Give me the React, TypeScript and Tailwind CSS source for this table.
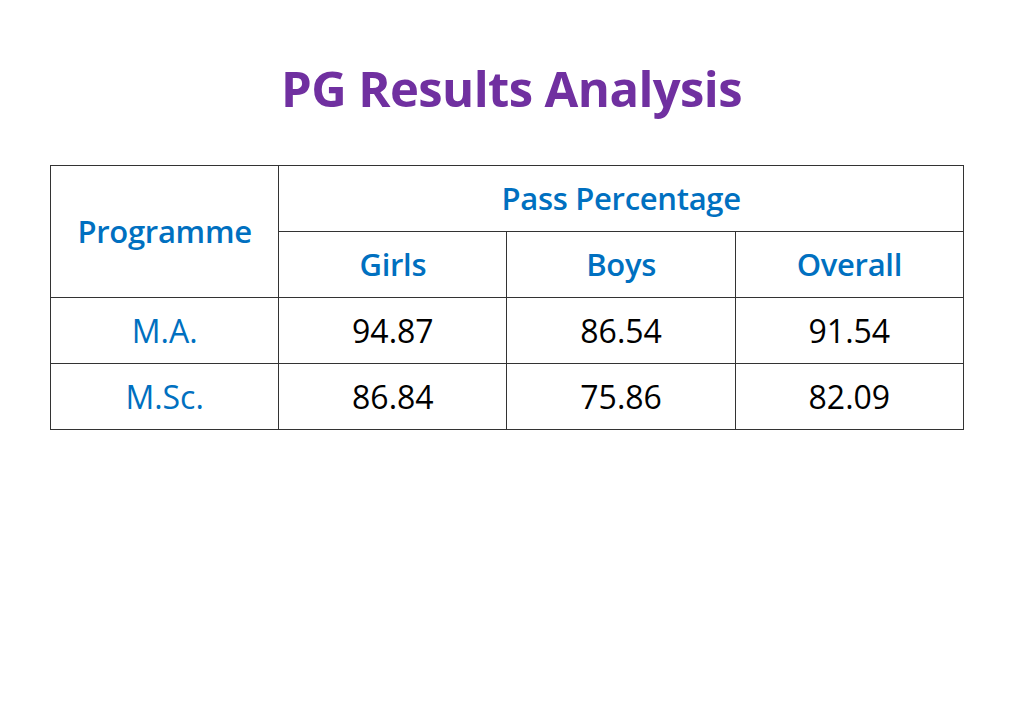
const rows = [
  { name: "M.A.", girls: "94.87", boys: "86.54", overall: "91.54" },
  { name: "M.Sc.", girls: "86.84", boys: "75.86", overall: "82.09" },
];

export default function App() {
  return (
    <div className="w-[1023px] h-[708px] bg-white font-['Open_Sans',sans-serif]">
      <h1 className="pt-[54px] text-center text-[49px] leading-[68px] font-bold tracking-[-0.6px] text-[#7030a0]">
        PG Results Analysis
      </h1>

      <table className="ml-[50px] mt-[43px] w-[914px] table-fixed border-collapse text-center">
        <colgroup>
          <col className="w-[228px]" />
          <col className="w-[228px]" />
          <col className="w-[228px]" />
          <col className="w-[228px]" />
        </colgroup>
        <thead className="font-semibold text-[#0070c0] text-[31px] leading-none tracking-[-0.3px]">
          <tr className="h-[66px]">
            <th rowSpan={2} className="border-[1.5px] border-[#333333] font-semibold">
              Programme
            </th>
            <th colSpan={3} className="border-[1.5px] border-[#333333] font-semibold">
              Pass Percentage
            </th>
          </tr>
          <tr className="h-[66px]">
            <th className="border-[1.5px] border-[#333333] font-semibold">Girls</th>
            <th className="border-[1.5px] border-[#333333] font-semibold">Boys</th>
            <th className="border-[1.5px] border-[#333333] font-semibold">Overall</th>
          </tr>
        </thead>
        <tbody className="text-[32px] leading-none">
          {rows.map((r) => (
            <tr key={r.name} className="h-[66px]">
              <td className="border-[1.5px] border-[#333333] text-[#0070c0]">{r.name}</td>
              <td className="border-[1.5px] border-[#333333] text-black">{r.girls}</td>
              <td className="border-[1.5px] border-[#333333] text-black">{r.boys}</td>
              <td className="border-[1.5px] border-[#333333] text-black">{r.overall}</td>
            </tr>
          ))}
        </tbody>
      </table>
    </div>
  );
}
